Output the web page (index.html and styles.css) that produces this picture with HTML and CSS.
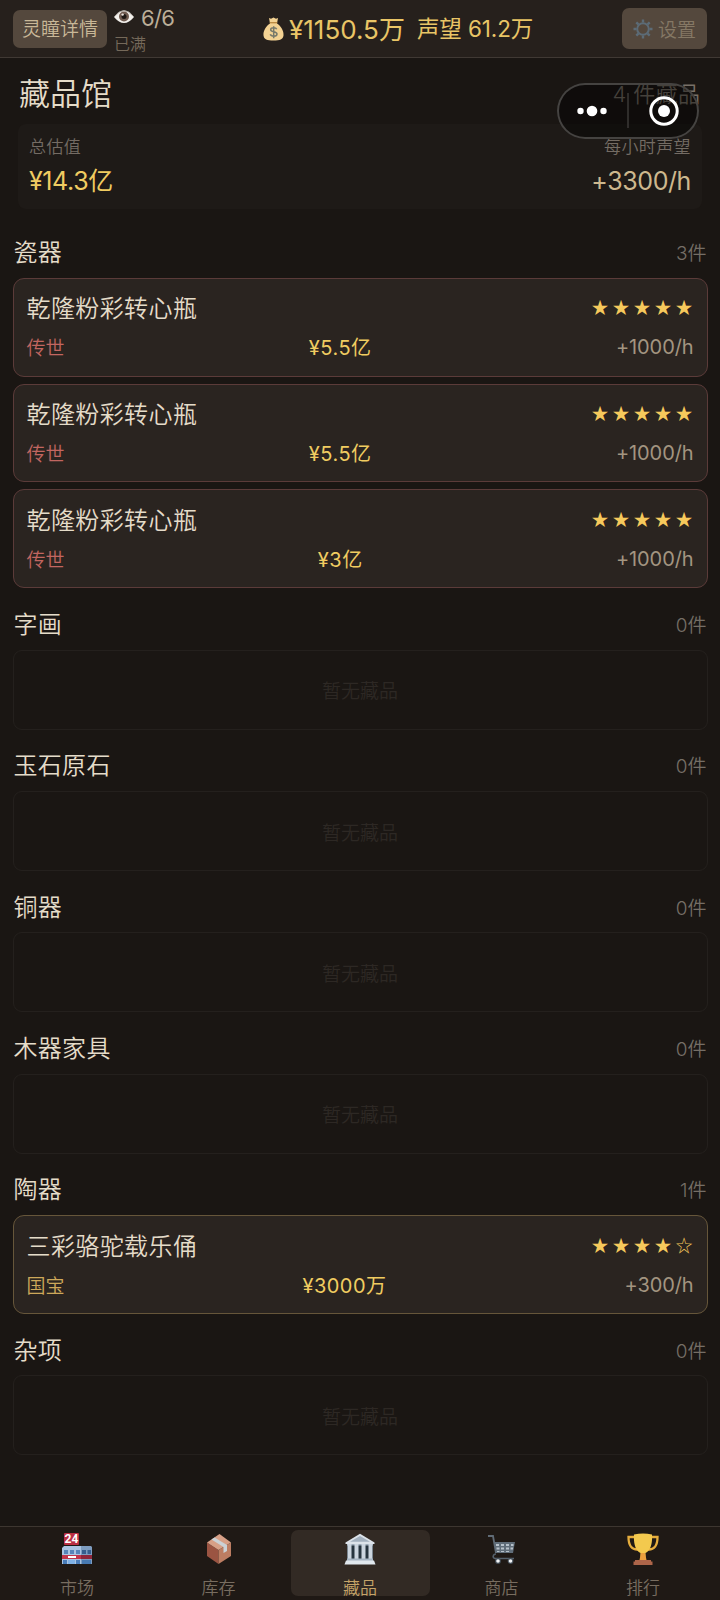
FILE: index.html
```html
<!DOCTYPE html>
<html lang="zh-CN">
<head>
<meta charset="utf-8">
<title>藏品馆</title>
<link rel="stylesheet" href="styles.css">
</head>
<body>
<header class="topbar">
  <div class="topbar-left">
    <button class="btn btn-detail">灵瞳详情</button>
    <div class="energy">
      <div class="energy-row">
        <svg class="eye" width="20" height="14" viewBox="0 0 20 14"><path d="M0 7Q10-6 20 7Q10 19 0 7Z" fill="#f3f0ec"/><path d="M1 6Q10-5 19 6" fill="none" stroke="#a9a29c" stroke-width="1"/><circle cx="10" cy="6.500" r="5" fill="#705b50"/><circle cx="10" cy="6.500" r="2.500" fill="#1d1714"/><circle cx="8.600" cy="4.600" r="1.200" fill="#e9e2dc"/></svg>
        <span class="energy-num">6/6</span>
      </div>
      <div class="energy-state">已满</div>
    </div>
  </div>
  <div class="wealth">
    <svg class="bag" width="21" height="24" viewBox="0 0 21 24"><path d="M6 1l2 .8L10.500.500 13 1.800 15 1 14 6.500C18 9 21 14 20.500 18.500 20 22.500 17 23.500 10.500 23.500S1 22.500.500 18.500C0 14 3 9 7 6.500Z" fill="#f3d293"/><path d="M6.800 5.700h7.400" stroke="#b9873f" stroke-width="1.300"/><path d="M13.700 12.200C13 10.300 7.700 10 7.700 12.700C7.700 15.600 14 14 14 17C14 20 8 19.700 7.300 17.300M10.700 9.300v12" fill="none" stroke="#77796b" stroke-width="1.500"/></svg>
    <span class="money">¥1150.5万</span>
    <span class="fame">声望 61.2万</span>
  </div>
  <button class="btn btn-settings">
    <svg width="20" height="20" viewBox="0 0 20 20" fill="none" stroke="#5c6b76"><circle cx="10" cy="10" r="5.800" stroke-width="2"/><path d="M10 0.500v3M10 16.500v3M0.500 10h3M16.500 10h3M3.300 3.300l2.100 2.100M14.600 14.600l2.100 2.100M3.300 16.700l2.100-2.100M14.600 5.400l2.100-2.100" stroke-width="2.400"/></svg>
    <span>设置</span>
  </button>
</header>

<div class="capsule">
  <svg width="142" height="56" viewBox="0 0 142 56"><g fill="#fff"><circle cx="23.500" cy="28" r="3.200"/><circle cx="35" cy="28" r="5.300"/><circle cx="46.500" cy="28" r="3.200"/><circle cx="107" cy="28" r="6"/></g><path d="M71 10v35" stroke="#3b3937" stroke-width="1.500"/><circle cx="107" cy="28" r="13.200" fill="none" stroke="#fff" stroke-width="3"/></svg>
</div>

<main class="page">
  <div class="page-head"><h1>藏品馆</h1><span class="total">4 件藏品</span></div>
  <div class="summary">
    <div class="stat"><span class="stat-label">总估值</span><span class="stat-value gold">¥14.3亿</span></div>
    <div class="stat right"><span class="stat-label">每小时声望</span><span class="stat-value sand">+3300/h</span></div>
  </div>

  <section class="group">
    <div class="group-head"><h2>瓷器</h2><span class="count">3件</span></div>
    <div class="cards">
      <article class="card red">
        <div class="row row-a"><span class="name">乾隆粉彩转心瓶</span><span class="stars">★★★★★</span></div>
        <div class="row row-b"><span class="grade">传世</span><span class="price">¥5.5亿</span><span class="rate">+1000/h</span></div>
      </article>
      <article class="card red">
        <div class="row row-a"><span class="name">乾隆粉彩转心瓶</span><span class="stars">★★★★★</span></div>
        <div class="row row-b"><span class="grade">传世</span><span class="price">¥5.5亿</span><span class="rate">+1000/h</span></div>
      </article>
      <article class="card red">
        <div class="row row-a"><span class="name">乾隆粉彩转心瓶</span><span class="stars">★★★★★</span></div>
        <div class="row row-b"><span class="grade">传世</span><span class="price">¥3亿</span><span class="rate">+1000/h</span></div>
      </article>
    </div>
  </section>
  <section class="group">
    <div class="group-head"><h2>字画</h2><span class="count">0件</span></div>
    <div class="empty">暂无藏品</div>
  </section>
  <section class="group">
    <div class="group-head"><h2>玉石原石</h2><span class="count">0件</span></div>
    <div class="empty">暂无藏品</div>
  </section>
  <section class="group">
    <div class="group-head"><h2>铜器</h2><span class="count">0件</span></div>
    <div class="empty">暂无藏品</div>
  </section>
  <section class="group">
    <div class="group-head"><h2>木器家具</h2><span class="count">0件</span></div>
    <div class="empty">暂无藏品</div>
  </section>
  <section class="group">
    <div class="group-head"><h2>陶器</h2><span class="count">1件</span></div>
    <div class="cards">
      <article class="card bronze">
        <div class="row row-a"><span class="name">三彩骆驼载乐俑</span><span class="stars">★★★★☆</span></div>
        <div class="row row-b"><span class="grade">国宝</span><span class="price">¥3000万</span><span class="rate">+300/h</span></div>
      </article>
    </div>
  </section>
  <section class="group">
    <div class="group-head"><h2>杂项</h2><span class="count">0件</span></div>
    <div class="empty">暂无藏品</div>
  </section>
</main>

<nav class="tabs">
  <a class="tab">
    <svg width="32" height="32" viewBox="0 0 32 32"><rect x="3" y="0" width="15" height="12" rx="1" fill="#b92f43"/><text x="10.500" y="10.400" class="sign">24</text><path d="M1 15l2-2h27l1 2v16H1z" fill="#a9c4e2"/><path d="M20 13h10l1 2v16H20z" fill="#7d9cc0"/><path d="M3 17h4v4H3zM9 17h4v4H9zM15 17h4v4h-4z" fill="#5684b9"/><path d="M21 17h4v4h-4zM26.500 17H30v4h-3.500z" fill="#365e8f"/><path d="M1 22h30v4H1z" fill="#c0354b"/><path d="M20 22h11v4H20z" fill="#8e263c"/><path d="M7 24h8" stroke="#fff" stroke-width="2"/><path d="M2 27h4v4H2zM15 27h4v4h-4z" fill="#487cb9"/><path d="M7 27h7v4H7z" fill="#7fb1e6"/><path d="M21 27h9v4h-9z" fill="#4779b1"/></svg>
    <span>市场</span>
  </a>
  <a class="tab">
    <svg width="32" height="32" viewBox="0 0 32 32"><path d="M4 9.500L15.500 17v14L4 23z" fill="#9b5442"/><path d="M15.500 17L28 9.500V23L15.500 31z" fill="#bd7d62"/><path d="M4 9.500L16.500 1 28 9.500 15.500 17z" fill="#d7a087"/><path d="M8.500 6.500l3-2L24 12v6l-3.500 2v-6z" fill="#cbd2d6"/></svg>
    <span>库存</span>
  </a>
  <a class="tab active">
    <svg width="32" height="32" viewBox="0 0 32 32"><path d="M1.500 9.500L16 .800 30.500 9.500V11h-29z" fill="#dce3ea"/><path d="M6 8.800L16 3l10 5.800z" fill="#a3b1bf"/><path d="M3 11h26v15H3z" fill="#26343f"/><path d="M3 11h26v1.500H3z" fill="#9cabb8"/><path d="M3.500 11h4v15h-4zM10.500 11h4v15h-4zM17.500 11h4v15h-4zM24.500 11h4v15h-4z" fill="#cbd5df"/><path d="M3 25.500h26V28H3z" fill="#a6b5c3"/><path d="M2 27.500h28l1.500 4H.500z" fill="#e1e8ee"/></svg>
    <span>藏品</span>
  </a>
  <a class="tab">
    <svg width="32" height="32" viewBox="0 0 32 32"><path d="M2 3h5l3 17" fill="none" stroke="#606b76" stroke-width="1.800"/><path d="M8 9h21l-2 11H10z" fill="#606d79"/><path d="M10 11h3v2h-3zM15 11h3v2h-3zM20 11h3v2h-3zM25 11h2.500v2H25zM10.500 14.500h3v2h-3zM15 14.500h3v2h-3zM20 14.500h3v2h-3zM24.500 14.500H27v2h-2.500zM11 18h2.500v1H11zM15 18h3v1h-3zM20 18h3v1h-3z" fill="#b7c1ca"/><path d="M10 21c-3 0-4 4-1 4.500h19" fill="none" stroke="#56616c" stroke-width="1.600"/><circle cx="12" cy="28" r="2.900" fill="#46515b"/><circle cx="24.500" cy="28" r="2.900" fill="#46515b"/><circle cx="12" cy="28" r="1.800" fill="#f1f3f5"/><circle cx="24.500" cy="28" r="1.800" fill="#f1f3f5"/></svg>
    <span>商店</span>
  </a>
  <a class="tab">
    <svg width="32" height="32" viewBox="0 0 32 32"><path d="M8 4H1.500Q1.500 17 11 16.500M24 4h6.500Q30.500 17 21 16.500" fill="none" stroke="#e6ad3d" stroke-width="2.300"/><path d="M7 1.500Q16-.500 25 1.500C25.500 10 24 17 18.500 20v6h-5v-6C8 17 6.500 10 7 1.500z" fill="#f3c94e"/><path d="M14 20h4l1.500 7h-7z" fill="#ea9f3e"/><path d="M8 27h16v1.500h1.500V32h-19v-3.500H8z" fill="#ad6549"/></svg>
    <span>排行</span>
  </a>
</nav>
</body>
</html>
```
FILE: styles.css
```css
* { box-sizing: border-box; }
body {
  margin: 0;
  width: 720px;
  height: 1600px;
  display: flex;
  flex-direction: column;
  background: #1a1613;
  color: #e5dcc9;
  font-family: Inter, "Noto Sans CJK SC", sans-serif;
  font-weight: 350;
  position: relative;
  overflow: hidden;
  white-space: nowrap;
}
h1, h2 { margin: 0; font-weight: inherit; }
svg { display: block; flex: none; }

.topbar {
  height: 58px;
  flex: none;
  display: grid;
  grid-template-columns: 250px 1fr 98px;
  background: #26201c;
  border-bottom: 1px solid #403934;
}
.topbar-left { display: flex; padding-left: 13px; gap: 7px; }
.btn {
  border: 0;
  padding: 0;
  border-radius: 7px;
  background: #54483d;
  color: #c9b898;
  font: inherit;
}
.btn-detail { width: 94px; height: 38px; margin-top: 10px; font-size: 19px; line-height: 38px; padding-top: 1px; }
.btn-settings {
  width: 85px;
  height: 41px;
  margin-top: 8px;
  display: flex;
  align-items: center;
  justify-content: center;
  gap: 5px;
  font-size: 19px;
  color: #857865;
}
.energy-row { display: flex; align-items: center; gap: 7px; height: 34px; font-size: 22px; color: #bbae98; }
.energy-num { letter-spacing: -0.6px; padding-top: 1px; font-weight: 400; }
.energy-state { font-size: 16px; line-height: 20px; color: #75695a; }
.wealth { display: flex; align-items: center; height: 57px; padding-left: 13px; color: #e9c566; }
.bag { margin-top: 1px; margin-right: 5px; }
.money { font-size: 26px; margin-top: -2px; font-weight: 400; }
.fame { font-size: 22.500px; letter-spacing: -0.1px; margin-left: 12px; margin-top: -3px; font-weight: 400; }

.capsule {
  position: absolute;
  left: 557px;
  top: 83px;
  width: 142px;
  height: 56px;
  border-radius: 28px;
  background: rgba(0, 0, 0, 0.42);
  box-shadow: inset 0 0 0 2px #454341;
  z-index: 2;
}

.page { flex: 1; padding: 0 12.500px; }
.page-head {
  height: 66px;
  padding: 0 7px 0 6.500px;
  display: flex;
  align-items: center;
  justify-content: space-between;
}
.page-head h1 { font-size: 31px; line-height: 40px; padding-top: 6px; }
.total { font-size: 22px; letter-spacing: 0.4px; color: #787067; padding-top: 2px; }
.summary {
  height: 85px;
  margin: 0 5.500px 25.500px;
  padding: 12px 11px;
  border-radius: 8px;
  background: #1e1a17;
  display: flex;
  justify-content: space-between;
}
.stat { display: flex; flex-direction: column; gap: 6px; }
.stat.right { align-items: flex-end; }
.stat-label { font-size: 17px; line-height: 22px; color: #746c64; letter-spacing: 0.4px; }
.stat-value { font-size: 25px; line-height: 34px; letter-spacing: -0.4px; font-weight: 400; }
.gold { color: #f0cc61; }
.sand { color: #cdb88e; }

.group { margin-bottom: 18px; }
.group-head {
  height: 36px;
  margin-bottom: 7.400px;
  padding: 0 1px;
  display: flex;
  align-items: center;
  justify-content: space-between;
}
.group-head h2 { font-size: 24px; line-height: 36px; letter-spacing: 0.3px; padding-top: 1px; }
.count { font-size: 19px; color: #756e66; margin-top: -2px; }
.cards { display: flex; flex-direction: column; gap: 7px; }
.card {
  height: 98.800px;
  padding: 8px 13px 0;
  border: 1.500px solid;
  border-radius: 11px;
  background: #2a2420;
}
.card.red { border-color: #5b3b39; }
.card.bronze { border-color: #66563a; }
.row { display: flex; justify-content: space-between; align-items: center; }
.row-a { height: 40px; }
.row-b { height: 40px; }
.name { font-size: 24px; letter-spacing: 0.4px; }
.stars { font-family: "Noto Sans CJK SC", sans-serif; font-size: 17px; letter-spacing: 4px; margin-right: -3px; color: #f6c95c; }
.grade { font-size: 19px; }
.red .grade { color: #c26660; }
.bronze .grade { color: #cda85a; }
.price { font-size: 20px; letter-spacing: 0.500px; color: #f0cc61; font-weight: 400; }
.rate { font-size: 20px; color: #a39580; padding-top: 1px; font-weight: 400; letter-spacing: -0.1px; }
.empty {
  height: 80px;
  border: 1.500px solid #24201d;
  border-radius: 9px;
  display: flex;
  align-items: center;
  justify-content: center;
  font-size: 19px;
  color: #2d2824;
}

.tabs {
  height: 74px;
  flex: none;
  border-top: 1px solid #3d3630;
  background: #1f1915;
  display: grid;
  grid-template-columns: repeat(5, 139px);
  grid-template-rows: 66px;
  gap: 2.500px;
  padding: 3px 7px 4px 7.500px;
}
.tab {
  display: flex;
  flex-direction: column;
  align-items: center;
  gap: 10px;
  padding-top: 3px;
  border-radius: 7px;
  font-size: 17px;
  line-height: 26px;
  color: #786d60;
}
.tab.active { background: #322a24; color: #c5a468; }
.sign { font: 700 12px Roboto, sans-serif; fill: #fff; text-anchor: middle; }
```
